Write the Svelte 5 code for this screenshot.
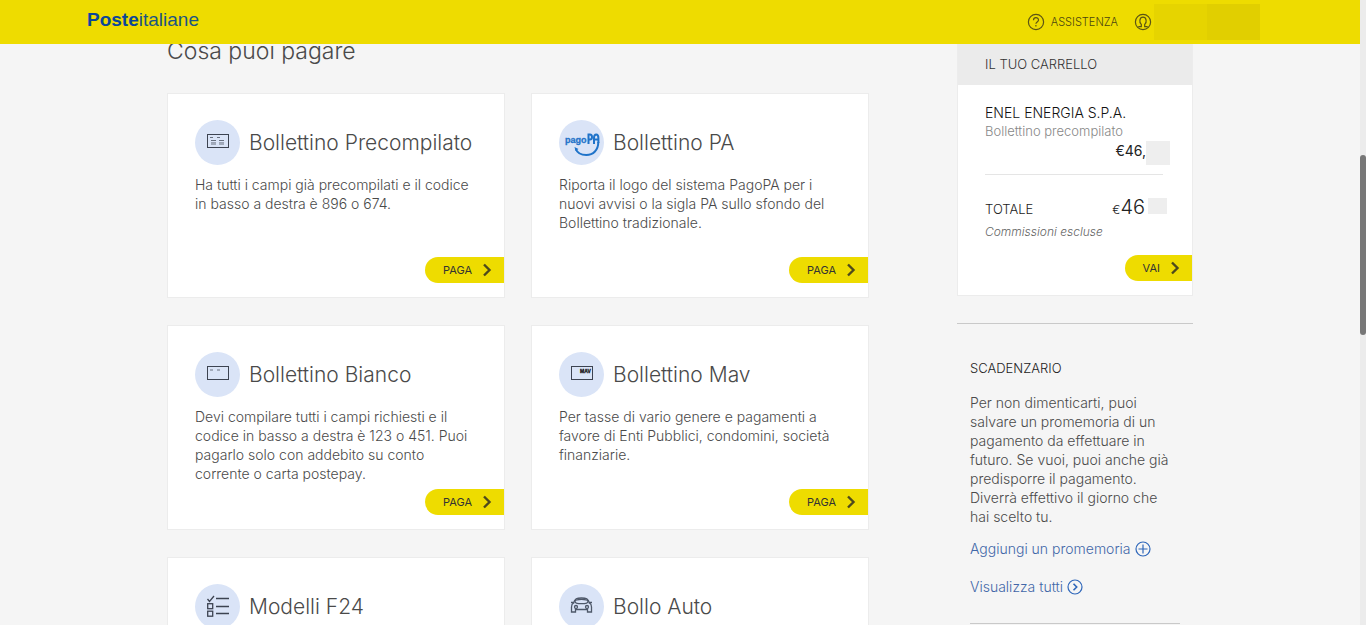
<script>
  const cards = [
    { icon: 'precompilato', title: 'Bollettino Precompilato', text: 'Ha tutti i campi già precompilati e il codice in basso a destra è 896 o 674.' },
    { icon: 'pagopa', title: 'Bollettino PA', text: 'Riporta il logo del sistema PagoPA per i nuovi avvisi o la sigla PA sullo sfondo del Bollettino tradizionale.' },
    { icon: 'bianco', title: 'Bollettino Bianco', text: 'Devi compilare tutti i campi richiesti e il codice in basso a destra è 123 o 451. Puoi pagarlo solo con addebito su conto corrente o carta postepay.' },
    { icon: 'mav', title: 'Bollettino Mav', text: 'Per tasse di vario genere e pagamenti a favore di Enti Pubblici, condomini, società finanziarie.' },
    { icon: 'f24', title: 'Modelli F24' },
    { icon: 'auto', title: 'Bollo Auto' }
  ];
</script>

{#snippet chevron()}
  <svg width="10" height="14" viewBox="0 0 10 14" fill="none" stroke="#4d4a1c" stroke-width="2.4"><path d="M2 1.5 7.5 7 2 12.5" /></svg>
{/snippet}

<div class="page">
  <header>
    <a class="logo" href="#home"><b>Poste</b>italiane</a>
    <nav>
      <a href="#assistenza">
        <svg width="18" height="18" viewBox="0 0 18 18" fill="none" stroke="#5b5414" stroke-width="1.2">
          <circle cx="9" cy="9" r="7.6" />
          <path d="M6.5 7.2c0-3.4 5-3.2 5-.3 0 2-2.6 2-2.6 3.9M8.9 12v1.5" />
        </svg>
        ASSISTENZA
      </a>
      <a href="#profilo" aria-label="Profilo">
        <svg width="18" height="18" viewBox="0 0 18 18" fill="none" stroke="#5b5414" stroke-width="1.2">
          <circle cx="9" cy="9" r="7.6" />
          <path d="M4.3 13.6h3v-2.2C4.9 9.5 5.4 4.2 9 4.2s4.1 5.3 1.7 7.2v2.2h3" />
        </svg>
        <span class="user"></span>
      </a>
    </nav>
  </header>

  <main>
    <section class="services">
      <h1>Cosa puoi pagare</h1>
      <div class="grid">
        {#each cards as card}
          <article>
            <div class="title">
              <svg width="45" height="45" viewBox="0 0 45 45" fill="none" stroke="#3c4351">
                <circle cx="22.5" cy="22.5" r="22.5" fill="#dae4f7" stroke="none" />
                {#if card.icon === 'precompilato'}
                  <rect x="12.5" y="14.5" width="21" height="13" />
                  <path d="M15 17.5h3m4 0h3M16 20.5h5m3 0h5M16 24h5m3 0h5" stroke="#68707f" />
                  <path d="M16 22.5h5m3 0h5" stroke="#9ba4b5" />
                {:else if card.icon === 'pagopa'}
                  <text x="6" y="23" class="pago">pago</text>
                  <path d="M29.5 24V14.5H31q2 0 2 2.5t-2 2.5h-1.5M35 24v-6q0-3.5 2.2-3.5t2.2 3.5v5M35 19.5h4" stroke="#1f73c9" stroke-width="2" />
                  <path d="M39.3 22c0 8-5 13-12 13-5 0-9-2-10.5-6" stroke="#1f73c9" stroke-width="2" />
                  <path d="m15.5 27 1 4 3-2z" fill="#1f73c9" stroke="none" />
                {:else if card.icon === 'bianco'}
                  <rect x="12.5" y="14.5" width="21" height="13" />
                  <path d="M15 18h3m4 0h3" stroke="#68707f" />
                {:else if card.icon === 'mav'}
                  <rect x="12.5" y="14.5" width="21" height="13" />
                  <text x="21" y="21" class="mav">MAV</text>
                {:else if card.icon === 'f24'}
                  <path d="m12.5 15 2 2.5 4.5-5.5M21 14.5h13M21 22.5h13M21 29.5h13" stroke-width="1.3" />
                  <rect x="12.7" y="19.7" width="5" height="5" stroke-width="1.3" />
                  <rect x="12.7" y="27.2" width="5" height="5" stroke-width="1.3" />
                {:else}
                  <g stroke="#4e5869" stroke-width="1.3">
                    <path d="M14.5 19.5c1-5 3.5-5.500 8-5.500s7 .5 8 5.500M12 18.500h2.500m16 0H33M14.500 19q-2 1-2 4v5h4v-2.500h12V28h4v-5q0-3-2-4" />
                    <ellipse cx="22.5" cy="17.5" rx="6.5" ry="2.2" />
                    <circle cx="17" cy="23" r="1.5" /><circle cx="28" cy="23" r="1.5" />
                  </g>
                {/if}
              </svg>
              <h2>{card.title}</h2>
            </div>
            {#if card.text}
              <p>{card.text}</p>
              <button>PAGA {@render chevron()}</button>
            {/if}
          </article>
        {/each}
      </div>
    </section>

    <aside>
      <section class="cart">
        <h3>IL TUO CARRELLO</h3>
        <div class="cart-body">
          <strong>ENEL ENERGIA S.P.A.</strong>
          <small>Bollettino precompilato</small>
          <div class="price">€46,<span class="mask"></span></div>
          <hr />
          <div class="total">
            <span>TOTALE</span>
            <span class="amount"><small>€</small>46<span class="mask"></span></span>
          </div>
          <em>Commissioni escluse</em>
          <button>VAI {@render chevron()}</button>
        </div>
      </section>

      <section class="reminders">
        <h3>SCADENZARIO</h3>
        <p>Per non dimenticarti, puoi salvare un promemoria di un pagamento da effettuare in futuro. Se vuoi, puoi anche già predisporre il pagamento. Diverrà effettivo il giorno che hai scelto tu.</p>
        <a href="#aggiungi">
          Aggiungi un promemoria
          <svg width="16" height="16" viewBox="0 0 16 16" fill="none" stroke="#2f67ba" stroke-width="1.2"><circle cx="8" cy="8" r="7" /><path d="M8 3.5v9M3.5 8h9" /></svg>
        </a>
        <a href="#tutti">
          Visualizza tutti
          <svg width="16" height="16" viewBox="0 0 16 16" fill="none" stroke="#2f67ba" stroke-width="1.2"><circle cx="8" cy="8" r="7" /><path d="m6.5 4.8 3.2 3.2-3.2 3.2" stroke-width="1.6" /></svg>
        </a>
      </section>
    </aside>
  </main>
  <div class="scrollbar"><div class="thumb"></div></div>
</div>

<style>
  :global(body) { background: #f5f5f5; overflow: hidden; }
  .page { height: 100vh; overflow: hidden; padding-right: 6px; box-sizing: border-box; font-family: Inter, "Open Sans", sans-serif; font-size: 14px; line-height: 19px; font-weight: 300; color: #4a4a4a; }
  header { position: fixed; z-index: 2; top: 0; left: 0; right: 6px; height: 44px; box-sizing: border-box; padding: 0 100px 0 87px; background: #eedc00; display: flex; align-items: center; justify-content: space-between; }
  a { text-decoration: none; }
  .logo { font: 19px/20px "Liberation Sans", Arial, sans-serif; color: #1b5582; padding-bottom: 4px; }
  .logo b { color: #0b4698; }
  nav { display: flex; align-items: center; gap: 16px; }
  nav a { display: flex; align-items: center; gap: 6px; font-size: 11px; color: #4b4510; }
  .user { width: 106px; height: 36px; margin-left: -4px; background: linear-gradient(90deg, #e6d400 50%, #e1cf00 50%); }
  main { display: grid; grid-template-columns: minmax(0, 1fr) 236px; column-gap: 88px; max-width: 1026px; margin: 0 auto; padding-top: 36px; }
  h1, h2, h3, p { margin: 0; font-weight: 300; }
  h1 { font-size: 23px; line-height: 30px; margin-bottom: 27px; }
  .grid { display: grid; grid-template-columns: 1fr 1fr; gap: 27px 26px; }
  article { display: flex; flex-direction: column; min-height: 205px; box-sizing: border-box; padding: 26px 0 14px 27px; background: #fff; border: 1px solid #ececec; }
  .title { display: flex; align-items: center; gap: 9px; }
  h2 { font-size: 21px; line-height: 26px; }
  article p { margin-top: 10px; padding-right: 27px; }
  .pago { font: bold 9px "Liberation Sans", sans-serif; fill: #1f73c9; stroke: #1f73c9; stroke-width: 0.3; }
  .mav { font: bold 5px "Liberation Sans", sans-serif; fill: #111; stroke: #111; stroke-width: 0.3; }
  button { display: flex; align-items: center; justify-content: space-between; gap: 10px; align-self: flex-end; height: 26px; margin-top: auto; padding: 0 12px 0 18px; border: 0; border-radius: 13px 0 0 13px; background: #eedc00; font-family: inherit; font-size: 11px; color: #333; cursor: pointer; }
  .cart { background: #fff; border: 1px solid #ececec; border-top: 0; margin-top: 8px; }
  .cart h3 { padding: 11px 27px; background: #ebebeb; font-size: 13px; color: #333; }
  .cart-body { display: flex; flex-direction: column; padding: 18px 0 14px 27px; }
  strong { font-weight: 300; color: #111; }
  .cart-body > small { font-size: 13px; color: #888; }
  .price { display: flex; align-items: flex-start; justify-content: flex-end; margin-right: 22px; height: 24px; font-weight: 400; color: #222; }
  .price .mask { width: 24px; height: 24px; background: #eee; }
  hr { width: 178px; margin: 9px 0 0; border: 0; border-top: 1px solid #e5e5e5; }
  .total { display: flex; align-items: baseline; justify-content: space-between; margin: 20px 25px 0 0; line-height: 24px; font-size: 13px; color: #222; }
  .amount { display: flex; align-items: baseline; font-size: 20px; }
  .amount small { font-size: 12px; }
  .amount .mask { width: 19px; height: 16px; margin-left: 3px; background: #eee; }
  em { font-size: 12px; color: #666; }
  .cart button { margin-top: 14px; }
  .reminders { margin-top: 27px; padding: 35px 13px 0; border-top: 1px solid #c9c9c9; }
  .reminders h3 { font-size: 13px; color: #222; }
  .reminders p { margin: 15px 0 13px; }
  .reminders a { display: flex; align-items: center; gap: 4px; margin-bottom: 19px; color: #4267a8; }
  .reminders::after { content: ""; display: block; margin-top: 27px; border-top: 1px solid #c9c9c9; }
  .scrollbar { position: fixed; top: 0; right: 0; bottom: 0; width: 6px; padding-top: 155px; box-sizing: border-box; background: #ececec; }
  .thumb { height: 180px; border-radius: 3px; background: #777; }
</style>
